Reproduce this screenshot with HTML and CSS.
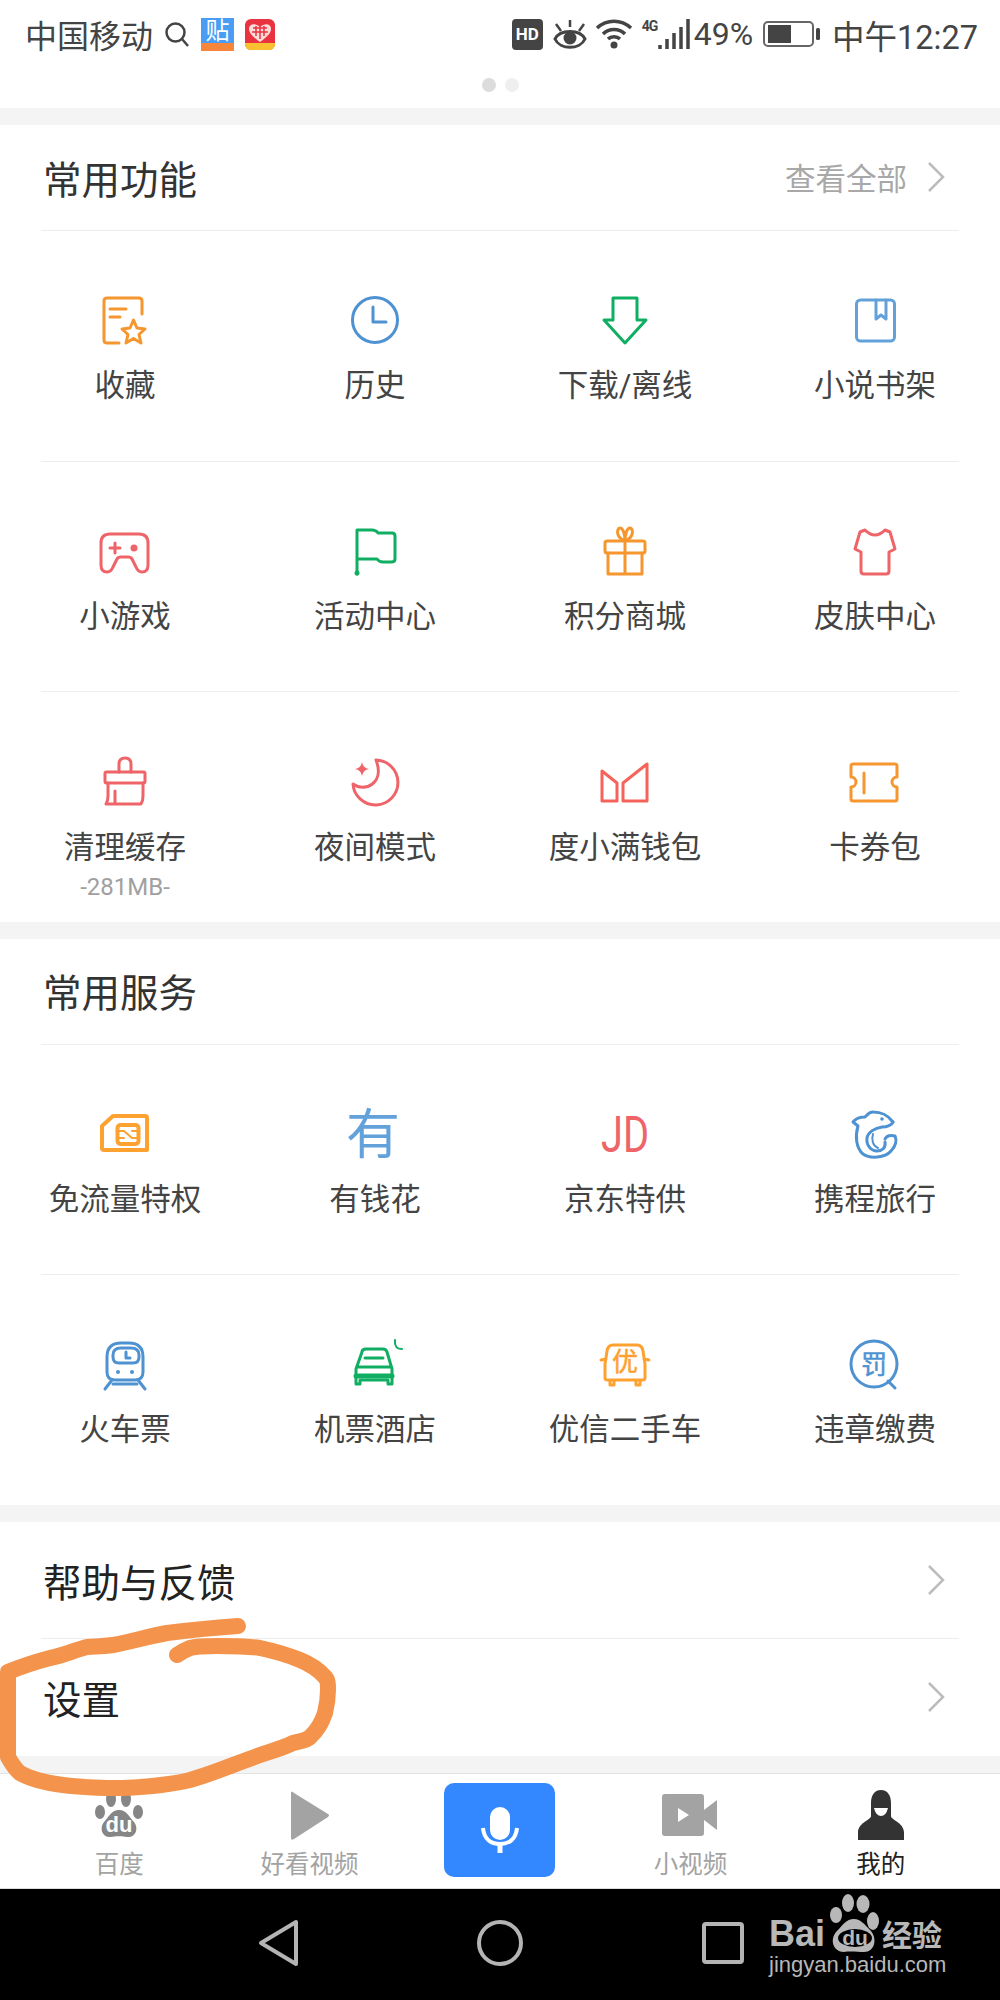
FILE: index.html
```html
<!DOCTYPE html>
<html>
<head>
  <meta charset="utf-8">
  <title>我的</title>
  <link rel="stylesheet" href="styles.css">
</head>
<body>
  <div class="statusbar">
    <div class="status-left">
      <span class="carrier">中国移动</span>
      <svg class="st-search" viewBox="0 0 26 26"><circle cx="11.500" cy="11.500" r="9"/><path d="M18 18l6 7"/></svg>
      <span class="tie-icon"><span class="tie-char">贴</span><span class="tie-band"></span></span>
      <svg class="st-app" viewBox="0 0 30 31"><rect width="30" height="31" rx="6" fill="#ea3341"/><path d="M15 23C7 17 4 14 4 9.500C4 5 10 3.500 15 8C20 3.500 26 5 26 9.500C26 14 23 17 15 23Z" fill="#fbdcd8"/><path d="M8 9h14M7 13h16M15 7v13M11 7v10M19 7v10" stroke="#ea3341" stroke-width="1.500"/><path d="M0 24H30V25C30 28 28 31 24 31H6C2 31 0 28 0 25Z" fill="#fbc02f"/></svg>
    </div>
    <div class="status-right">
      <span class="hd">HD</span>
      <svg class="st-eye" viewBox="0 0 36 32"><path d="M3 21C8 11 28 11 33 21C28 32 8 32 3 21Z" fill="none" stroke="#444" stroke-width="3"/><circle cx="18" cy="20" r="6.500" fill="#444"/><path d="M18 2V9M4 6L9 13M32 6L27 13" stroke="#444" stroke-width="2.500" fill="none"/></svg>
      <svg class="st-wifi" viewBox="0 0 38 30"><path d="M2 9C12 0 26 0 36 9M8 15C14 9 24 9 30 15M13 20C16 17 22 17 25 20" fill="none" stroke="#444" stroke-width="3.500"/><circle cx="19" cy="26" r="3.500" fill="#444"/></svg>
      <span class="net"><span class="net-label">4G</span><svg class="st-signal" viewBox="0 0 32 30"><path d="M2 30V26M9 30V20M16 30V14M23 30V8M30 30V0" stroke="#444" stroke-width="3.500"/></svg></span>
      <span class="st-text">49%</span>
      <svg class="st-batt" viewBox="0 0 58 26"><rect x="1" y="1" width="49" height="24" rx="4" fill="none" stroke="#666" stroke-width="2"/><rect x="5" y="4" width="23" height="18" fill="#444"/><rect x="53" y="7" width="4" height="12" rx="1.500" fill="#444"/></svg>
      <span class="st-text st-time">中午12:27</span>
    </div>
  </div>
  <div class="dots"><span class="dot dot-on"></span><span class="dot"></span></div>

  <section class="panel">
    <div class="panel-head">
      <h2>常用功能</h2>
      <span class="more">查看全部<svg class="chev" viewBox="0 0 18 32"><path d="M2 2l14 14L2 30"/></svg></span>
    </div>
    <div class="rule"></div>
    <div class="row">
      <div class="item">
        <svg class="ico orange" viewBox="0 0 60 60"><path d="M47 24V11Q47 8 44 8H12Q9 8 9 11V50Q9 53 12 53H24M15 19H31M15 27H25"/><path d="M38.500 30L42 38L50 39L44 44.500L46 53L38.500 48.500L31 53L33 44.500L27 39L35 38Z"/></svg>
        <span class="label">收藏</span>
      </div>
      <div class="item">
        <svg class="ico blue" viewBox="0 0 60 60"><circle cx="30" cy="30" r="22.500"/><path d="M28 17V32H41"/></svg>
        <span class="label">历史</span>
      </div>
      <div class="item">
        <svg class="ico green" viewBox="0 0 60 60"><path d="M18 8H42V30H51L30 53L9 30H18Z"/></svg>
        <span class="label">下载/离线</span>
      </div>
      <div class="item">
        <svg class="ico sky" viewBox="0 0 60 60"><rect x="11.500" y="10" width="38" height="41" rx="4"/><path d="M31 10V29L36 25L41 29V10"/></svg>
        <span class="label">小说书架</span>
      </div>
    </div>
    <div class="rule"></div>
    <div class="row">
      <div class="item">
        <svg class="ico red" viewBox="0 0 60 60"><path d="M15 13H44Q53 13 53 22V44Q53 51 47 51Q43 51 41 46L37 38Q36 36 33 36H26Q23 36 22 38L18 46Q16 51 12 51Q6 51 6 44V22Q6 13 15 13Z"/><path d="M15 27H25M20 22V32"/><circle class="solid" cx="39" cy="27" r="3.500"/></svg>
        <span class="label">小游戏</span>
      </div>
      <div class="item">
        <svg class="ico green" viewBox="0 0 60 60"><path d="M12 53V9H27Q31 9 33 12H47Q50 12 50 15V38Q50 41 46 41H38Q34 41 32 38H12"/><circle class="solid" cx="12" cy="52" r="2.500"/></svg>
        <span class="label">活动中心</span>
      </div>
      <div class="item">
        <svg class="ico orange" viewBox="0 0 60 60"><rect x="10" y="20" width="40" height="12" rx="2"/><path d="M13 32V53H47V32M30 20V53M30 20C20 16 22 7 25 7C28 7 30 13 30 20C30 13 32 7 35 7C38 7 40 16 30 20Z"/></svg>
        <span class="label">积分商城</span>
      </div>
      <div class="item">
        <svg class="ico red" viewBox="0 0 60 60"><path d="M20 9Q30 19 40 9L45 11L50 28L44 31V50Q44 53 41 53H19Q16 53 16 50V31L10 28L15 11Z"/></svg>
        <span class="label">皮肤中心</span>
      </div>
    </div>
    <div class="rule"></div>
    <div class="row row-low">
      <div class="item">
        <svg class="ico red" viewBox="0 0 60 60"><rect x="10" y="21" width="40" height="11" rx="1.500"/><path d="M24 21V13Q24 7 30 7Q36 7 36 13V21M13 32V45Q13 50 11 53H46Q48 50 48 45V32M20 40V53"/></svg>
        <span class="label">清理缓存</span>
        <span class="sub">-281MB-</span>
      </div>
      <div class="item">
        <svg class="ico red" viewBox="0 0 60 60"><path d="M31 9A22.500 22.500 0 1 1 8 33C20 42 40 32 31 9Z"/><path class="solid" d="M17 11Q18 17 24 18Q18 19 17 25Q16 19 10 18Q16 17 17 11Z"/></svg>
        <span class="label">夜间模式</span>
      </div>
      <div class="item">
        <svg class="ico coral" viewBox="0 0 60 60"><path d="M7 20L22 32V50H7ZM28 32L52 13V50H28Z"/></svg>
        <span class="label">度小满钱包</span>
      </div>
      <div class="item">
        <svg class="ico orange" viewBox="0 0 60 60"><path d="M8 13H50Q52 13 52 15V26A5 5 0 0 0 52 36V48Q52 50 50 50H8Q6 50 6 48V36A5 5 0 0 0 6 26V15Q6 13 8 13ZM19 22V42"/></svg>
        <span class="label">卡券包</span>
      </div>
    </div>
  </section>

  <section class="panel">
    <div class="panel-head">
      <h2>常用服务</h2>
    </div>
    <div class="rule"></div>
    <div class="row">
      <div class="item">
        <svg class="ico amber" viewBox="0 0 60 60"><path d="M18 12H50Q52 12 52 14V46H9Q7 46 7 44V22Z" stroke-width="4"/><rect x="22.500" y="21" width="21" height="19" rx="3" stroke-width="4"/><path d="M22 27H29L37 34H44M44 27H37M22 34H29" stroke-width="2"/></svg>
        <span class="label">免流量特权</span>
      </div>
      <div class="item">
        <svg class="ico sky" viewBox="0 0 60 60"><text class="ico-char" x="28" y="50">有</text></svg>
        <span class="label">有钱花</span>
      </div>
      <div class="item">
        <svg class="ico red" viewBox="0 0 60 60"><text class="ico-latin" x="30" y="48" textLength="48" lengthAdjust="spacingAndGlyphs">JD</text></svg>
        <span class="label">京东特供</span>
      </div>
      <div class="item">
        <svg class="ico blue" viewBox="0 0 60 60"><path d="M48 18C42 10 36 8 28 8C24 8 22 11 20 13C16 13 11 14 8 18L13 22C10 32 11 44 18 50C25 55 40 54 46 47C51 42 52 36 50 32C46 31 42 31 40 35"/><path d="M48 18C47 21 42 23 37 23C30 24 23 28 22 34C21 41 26 47 32 47C37 47 41 44 40 38"/><path d="M28 30C26 36 28 42 33 44" stroke-width="2"/><circle class="solid" cx="37" cy="15" r="1.800"/></svg>
        <span class="label">携程旅行</span>
      </div>
    </div>
    <div class="rule"></div>
    <div class="row">
      <div class="item">
        <svg class="ico blue" viewBox="0 0 60 60"><path d="M26 9H34Q48 9 48 23V38Q48 46 40 46H20Q12 46 12 38V23Q12 9 26 9Z"/><path d="M24 29Q18 29 18 23V21Q18 14 26 14H36Q44 14 44 21V23Q44 29 38 29ZM31 18V24H35M17 46L10 55M43 46L50 55M18 50H42"/><circle class="solid" cx="23" cy="38" r="2"/><circle class="solid" cx="37" cy="38" r="2"/></svg>
        <span class="label">火车票</span>
      </div>
      <div class="item">
        <svg class="ico green" viewBox="0 0 60 60"><path d="M17 18Q17 15 21 15H38Q41 15 42 18L47 35V50H43V46H15V50H11V35ZM12 33H46M20 24H38"/><path d="M11 42H47" stroke-width="5"/><path d="M50 6Q49 15 57 15" stroke-width="2"/></svg>
        <span class="label">机票酒店</span>
      </div>
      <div class="item">
        <svg class="ico amber" viewBox="0 0 60 60"><path d="M18 11H42Q47 11 48 17L50 30V44Q50 46 47 46H13Q10 46 10 44V30L12 17Q13 11 18 11ZM11 25L6 26M49 25L54 26M15 46V51H19V46M41 46V51H45V46"/><text class="ico-small" x="30" y="37">优</text></svg>
        <span class="label">优信二手车</span>
      </div>
      <div class="item">
        <svg class="ico blue" viewBox="0 0 60 60"><circle cx="29" cy="30" r="23"/><path d="M43 47L50 54"/><text class="ico-small" x="29" y="40">罚</text></svg>
        <span class="label">违章缴费</span>
      </div>
    </div>
  </section>

  <section class="panel">
    <div class="link-row">
      <span>帮助与反馈</span>
      <svg class="chev" viewBox="0 0 18 32"><path d="M2 2l14 14L2 30"/></svg>
    </div>
    <div class="rule"></div>
    <div class="link-row link-row-last">
      <span>设置</span>
      <svg class="chev" viewBox="0 0 18 32"><path d="M2 2l14 14L2 30"/></svg>
    </div>
  </section>

  <nav class="tabbar">
    <div class="tab">
      <svg class="tab-ico" viewBox="0 0 52 50"><g fill="#868686"><ellipse cx="7" cy="22" rx="5" ry="7"/><ellipse cx="18" cy="9" rx="5" ry="8"/><ellipse cx="33" cy="9" rx="5" ry="8"/><ellipse cx="45" cy="22" rx="5" ry="7"/><path d="M26 20C34 20 36 27 41 32C46 38 43 48 34 47C30 46 22 46 18 47C9 48 6 38 11 32C16 27 18 20 26 20Z"/></g><text class="du" x="26" y="42">du</text></svg>
      <span class="tab-label">百度</span>
    </div>
    <div class="tab">
      <svg class="tab-ico" viewBox="0 0 52 50"><path d="M7 3Q7 0 10 3L44 24Q46 25 44 27L10 49Q7 51 7 48Z" fill="#a3a3a3"/></svg>
      <span class="tab-label">好看视频</span>
    </div>
    <div class="mic-btn">
      <svg class="mic" viewBox="0 0 38 46"><rect x="9" y="0" width="20" height="33" rx="10" fill="#fff"/><path d="M2 21C3 32 10 37 19 37C28 37 35 32 36 21" fill="none" stroke="#fff" stroke-width="4"/><path d="M19 36V46" stroke="#fff" stroke-width="5"/></svg>
    </div>
    <div class="tab">
      <svg class="tab-ico tab-ico-wide" viewBox="0 0 58 50"><rect x="1" y="4" width="42" height="42" rx="3" fill="#a3a3a3"/><path d="M43 20L56 10V40L43 30Z" fill="#a3a3a3"/><path d="M17 18L28 25L17 32Z" fill="#fff"/></svg>
      <span class="tab-label">小视频</span>
    </div>
    <div class="tab tab-on">
      <svg class="tab-ico" viewBox="0 0 52 50"><path d="M26 0C33 0 36 6 36 13V26C36 30 48 32 49 42V50H3V42C4 32 16 30 16 26V13C16 6 19 0 26 0Z" fill="#333"/><path d="M19 18H33Q31 26 26 26Q21 26 19 18Z" fill="#fff"/></svg>
      <span class="tab-label">我的</span>
    </div>
  </nav>

  <div class="navkeys">
    <svg class="key key-back" viewBox="0 0 42 48"><path d="M38 3V45L3 24Z"/></svg>
    <svg class="key key-home" viewBox="0 0 48 48"><circle cx="24" cy="24" r="21"/></svg>
    <svg class="key key-task" viewBox="0 0 44 44"><rect x="3" y="3" width="38" height="38" rx="2"/></svg>
  </div>

  <!-- watermark, sits on the key bar -->
  <div class="wm">
    <div class="wm-top">
      <span class="wm-bai">Bai</span>
      <svg class="wm-paw" viewBox="0 0 52 59"><g fill="#b8b8b8"><ellipse cx="8" cy="21" rx="6" ry="8"/><ellipse cx="20" cy="9" rx="6" ry="9"/><ellipse cx="35" cy="10" rx="6.500" ry="9"/><ellipse cx="45" cy="27" rx="6" ry="9"/><path d="M26 25C33 25 37 31 42 36C50 44 47 58 36 58C31 58 22 57 16 58C5 58 1 45 9 37C15 31 18 25 26 25Z"/></g><ellipse cx="27" cy="44" rx="17" ry="9"/><text class="du du-wm" x="27" y="51">du</text></svg>
      <span class="wm-cn">经验</span>
    </div>
    <div class="wm-url">jingyan.baidu.com</div>
  </div>

  <!-- orange marker stroke drawn on the screenshot -->
  <svg class="marker" viewBox="0 1600 340 200"><path d="M238 1626C210 1628 190 1630 167 1633C150 1636 130 1642 113 1645C100 1647 95 1646 87 1647C75 1650 62 1656 50 1658C35 1662 20 1667 8 1672V1757C12 1764 16 1770 20 1773C32 1780 48 1783 63 1785C85 1788 103 1788 123 1788C145 1787 170 1785 190 1780C215 1773 237 1763 260 1755C272 1751 283 1748 293 1743C300 1741 306 1741 310 1737C318 1730 322 1722 325 1713C327 1705 328 1697 328 1690C328 1684 328 1680 325 1677C318 1669 310 1664 300 1660C288 1655 274 1651 260 1648C245 1646 232 1646 217 1646C206 1646 197 1646 190 1648C185 1650 181 1652 177 1655"/></svg>
</body>
</html>
```

FILE: styles.css
```css
* { margin: 0; padding: 0; box-sizing: border-box; }
body {
  position: relative;
  width: 1000px;
  height: 2000px;
  overflow: hidden;
  background: #fff;
  color: #444;
  font-family: "Roboto", "Noto Sans CJK SC", sans-serif;
}

/* status bar */
.statusbar {
  height: 68px;
  display: flex;
  justify-content: space-between;
  align-items: center;
  padding: 0 22px 0 25px;
}
.status-left, .status-right { display: flex; align-items: center; }
.carrier { font-size: 32px; color: #444; }
.st-search { width: 26px; height: 26px; margin-left: 11px; fill: none; stroke: #444; stroke-width: 2.500; }
.tie-icon {
  position: relative;
  width: 33px;
  height: 33px;
  margin-left: 11px;
  background: #4a9df5;
  overflow: hidden;
  display: flex;
  justify-content: center;
}
.tie-char { font-size: 24px; line-height: 26px; color: #fff; }
.tie-band { position: absolute; left: 0; right: 0; bottom: 0; height: 8px; background: #f6873a; }
.st-app { width: 30px; height: 31px; margin-left: 11px; }
.hd {
  width: 31px;
  height: 31px;
  border-radius: 4px;
  background: #444;
  color: #fff;
  font-size: 17px;
  font-weight: 700;
  line-height: 31px;
  text-align: center;
}
.st-eye { width: 36px; height: 32px; margin-left: 9px; }
.st-wifi { width: 38px; height: 30px; margin-left: 7px; }
.net { display: flex; align-items: flex-start; width: 48px; margin-left: 9px; }
.net-label { font-size: 14px; font-weight: 700; line-height: 14px; width: 16px; flex: none; letter-spacing: -1px; }
.st-signal { width: 32px; height: 30px; flex: none; }
.st-text { font-size: 32px; color: #444; margin-left: 4px; }
.st-batt { width: 58px; height: 26px; margin-left: 10px; }
.st-time { margin-left: 11px; font-size: 32.500px; }

.dots { display: flex; justify-content: center; gap: 9px; height: 40px; padding-top: 10px; }
.dot { width: 14px; height: 14px; border-radius: 50%; background: #efefef; }
.dot-on { background: #dcdcdc; }

/* panels */
.panel { border-top: 17px solid #f4f4f4; }
.panel-head {
  height: 105px;
  display: flex;
  justify-content: space-between;
  align-items: center;
  padding: 0 55px 2px 43px;
}
.panel-head h2 { font-size: 38.500px; font-weight: 400; color: #333; }
.more { display: flex; align-items: center; font-size: 30.500px; color: #a8a8a8; }
.chev { width: 18px; height: 32px; fill: none; stroke: #bcbcbc; stroke-width: 2.500; }
.more .chev { margin-left: 20px; }
.rule { height: 1px; margin: 0 41px; background: #ededed; }

.row { display: grid; grid-template-columns: repeat(4, 1fr); height: 229.500px; }
.item { display: flex; flex-direction: column; align-items: center; padding-top: 59px; }
.ico {
  width: 60px;
  height: 60px;
  margin-bottom: 15px;
  overflow: visible;
  fill: none;
  stroke: currentColor;
  stroke-width: 3;
  stroke-linejoin: round;
  stroke-linecap: round;
}
.row-low .ico { margin-bottom: 16px; }
.ico .solid { fill: currentColor; stroke: none; }
.ico text { fill: currentColor; stroke: none; text-anchor: middle; font-family: "Noto Sans CJK SC", sans-serif; }
.ico .ico-char { font-size: 54px; }
.ico .ico-latin { font-size: 50px; font-family: "Roboto", sans-serif; }
.ico .ico-small { font-size: 26px; stroke: currentColor; stroke-width: 0.500; }
.orange { color: #f6962f; }
.amber { color: #fda130; }
.blue { color: #4f92d1; }
.sky { color: #62a1da; }
.green { color: #0fae62; }
.red { color: #ee6468; }
.coral { color: #f5635a; }
.label { font-size: 30.500px; line-height: 42px; color: #444; white-space: nowrap; }
.sub { font-size: 24px; line-height: 30px; margin-top: 3px; color: #a0a0a0; }

.link-row {
  height: 116px;
  display: flex;
  justify-content: space-between;
  align-items: center;
  padding: 0 55px 0 43px;
  font-size: 38.500px;
  color: #222;
}
.link-row-last { height: 117px; }

/* tabs */
.tabbar {
  height: 133px;
  border-top: 17px solid #f4f4f4;
  border-bottom: 1px solid #ddd;
  box-shadow: inset 0 1px 0 #e3e3e3;
  display: grid;
  grid-template-columns: repeat(5, 1fr);
  padding: 0 24px;
}
.tab { display: flex; flex-direction: column; align-items: center; padding-top: 17px; }
.tab-ico { width: 52px; height: 50px; margin-bottom: 10px; }
.tab-ico-wide { width: 58px; }
.tab-label { font-size: 24.500px; line-height: 30px; color: #a3a3a3; white-space: nowrap; }
.tab-on .tab-label { color: #222; }
.du { font-family: "Liberation Sans", sans-serif; font-size: 22px; font-weight: 700; fill: #fff; text-anchor: middle; }
.du-wm { font-size: 21px; fill: #b8b8b8; }
.mic-btn {
  width: 111px;
  height: 94px;
  margin: 10px auto 0;
  border-radius: 10px;
  background: #3388ff;
  display: flex;
  justify-content: center;
  align-items: center;
}
.mic { width: 38px; height: 46px; }

/* android keys */
.navkeys {
  height: 111px;
  background: #000;
  display: flex;
  align-items: center;
  padding: 0 0 2px 258px;
}
.key { fill: none; stroke: #b4b4b4; stroke-width: 4; stroke-linejoin: round; flex: none; }
.key-back { width: 42px; height: 48px; }
.key-home { width: 48px; height: 48px; margin-left: 176px; }
.key-task { width: 44px; height: 44px; margin-left: 177px; }

.wm { position: absolute; left: 769px; top: 1894px; width: 180px; color: #b8b8b8; }
.wm-top { display: flex; align-items: flex-end; height: 59px; }
.wm-bai { font-family: "Liberation Sans", sans-serif; font-size: 36px; font-weight: 700; line-height: 42px; width: 59px; flex: none; margin-bottom: -2px; }
.wm-paw { width: 52px; height: 59px; flex: none; }
.wm-cn { font-size: 30px; line-height: 40px; font-weight: 700; white-space: nowrap; margin: 0 0 -3px 2px; }
.wm-url { font-family: "Liberation Sans", sans-serif; font-size: 22px; line-height: 24px; white-space: nowrap; }

.marker {
  position: absolute;
  left: 0;
  top: 1600px;
  width: 340px;
  height: 200px;
  fill: none;
  stroke: #f4944c;
  stroke-width: 16;
  stroke-linecap: round;
  stroke-linejoin: round;
}
```
